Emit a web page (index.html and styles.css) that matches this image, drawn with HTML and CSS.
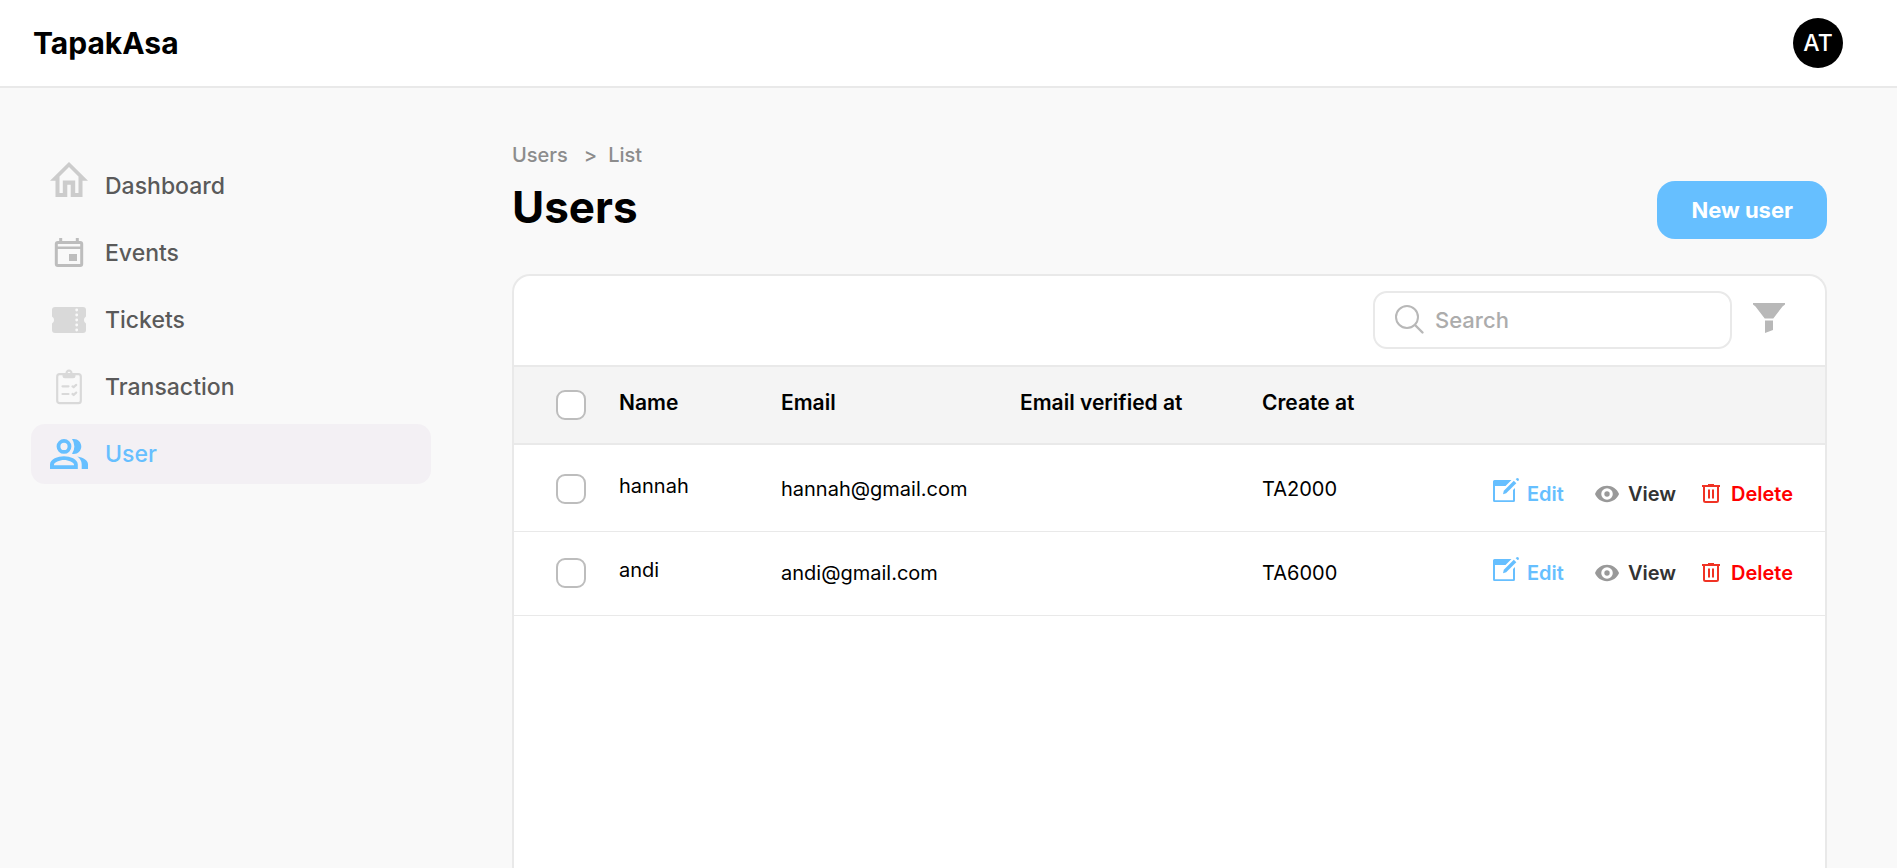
FILE: index.html
```html
<!DOCTYPE html>
<html lang="en">
<head>
<meta charset="utf-8">
<title>Users - TapakAsa</title>
<link rel="stylesheet" href="styles.css">
</head>
<body>
<svg class="sprite" aria-hidden="true">
  <symbol id="i-edit" viewBox="0 0 26 32">
    <path d="M1.500 2H18.500l-6 6H2v14.300h18V12l2-2v12.500a1.500 1.500 0 0 1-1.500 1.500h-19A1.500 1.500 0 0 1 0 22.500v-19A1.500 1.500 0 0 1 1.500 2z" fill="currentColor"/>
    <path d="M20.800 2.700l2.500 2.500L13.200 15.200 10 16.200 10.800 12.800z" fill="currentColor"/>
    <path d="M23 1.200L24.500 0 26 1.500l-1.200 1.500z" fill="currentColor" stroke="currentColor" stroke-width=".6" stroke-linejoin="round"/>
  </symbol>
  <symbol id="i-eye" viewBox="0 0 26 18">
    <path fill-rule="evenodd" d="M0 9C2 4 7 .5 12.500 .5S23 4 25 9c-2 5-7 8.500-12.500 8.500S2 14 0 9zm12.500 6a6 6 0 1 0 0-12 6 6 0 0 0 0 12z" fill="currentColor"/>
    <circle cx="12.500" cy="9" r="2.800" fill="currentColor"/>
  </symbol>
  <symbol id="i-trash" viewBox="0 0 21 20">
    <path d="M0 2h18M6 1h6" stroke="currentColor" stroke-width="2" fill="none"/>
    <path d="M2 2v14.500a1.500 1.500 0 0 0 1.500 1.500h11a1.500 1.500 0 0 0 1.500-1.500V2M7 5.500v9M11 5.500v9" stroke="currentColor" stroke-width="2" fill="none"/>
  </symbol>
</svg>

<header class="topbar">
  <a class="brand" href="#">TapakAsa</a>
  <button class="avatar" type="button" aria-label="Account AT">AT</button>
</header>

<div class="layout">
  <nav class="sidebar" aria-label="Main">
    <a class="nav-item" href="#">
      <svg class="nav-icon home" viewBox="0 0 38 48"><path fill-rule="evenodd" d="M19 0l19 18.700h-5.500V35H20.700V22.700h-3.400V35H5.500V18.700H0zM9.500 31h3.300V18.500h12.400V31h3.300V14.500L19 5 9.500 14.500z" fill="currentColor"/></svg>
      <span>Dashboard</span>
    </a>
    <a class="nav-item" href="#">
      <svg class="nav-icon events" viewBox="0 0 38 48"><rect x="6.300" y="13.500" width="25.400" height="23" rx="1.500" fill="none" stroke="currentColor" stroke-width="3"/><path d="M5 17.500h28V20H5zM9.200 9h3v4h-3zM25.800 9h3v4h-3zM19 25h8v7h-8z" fill="currentColor"/></svg>
      <span>Events</span>
    </a>
    <a class="nav-item" href="#">
      <svg class="nav-icon light" viewBox="0 0 38 48"><path fill-rule="evenodd" d="M5 11h28a3 3 0 0 1 3 3v6.500a4 4 0 0 0 0 7V34a3 3 0 0 1-3 3H5a3 3 0 0 1-3-3v-6.500a4 4 0 0 0 0-7V14a3 3 0 0 1 3-3z" fill="currentColor"/><path d="M26.700 14v21" fill="none" stroke="#f9f9f9" stroke-width="2.800" stroke-linecap="round" stroke-dasharray="0 5"/></svg>
      <span>Tickets</span>
    </a>
    <a class="nav-item" href="#">
      <svg class="nav-icon light" viewBox="0 0 38 48"><rect x="7.200" y="11.200" width="23.600" height="29" rx="2.500" fill="none" stroke="currentColor" stroke-width="2.200"/><path fill-rule="evenodd" d="M12.500 10.500h3A3.500 3.500 0 0 1 19 6.500a3.500 3.500 0 0 1 3.500 4h3v2.200a2.500 2.500 0 0 1-2.500 2.500h-8a2.500 2.500 0 0 1-2.500-2.500zM19 8.800a1.400 1.400 0 1 0 0 2.800 1.400 1.400 0 0 0 0-2.800z" fill="currentColor"/><path d="M12.500 23.300h6M12.500 31h6M22.500 23.300l1.200.8 2.500-2.200M22.500 31l1.200.8 2.500-2.200" fill="none" stroke="currentColor" stroke-width="2.200" stroke-linecap="round"/></svg>
      <span>Transaction</span>
    </a>
    <a class="nav-item active" href="#" aria-current="page">
      <svg class="nav-icon" viewBox="0 0 38 48"><circle cx="14" cy="16.400" r="5.500" fill="none" stroke="currentColor" stroke-width="3.800"/><path fill-rule="evenodd" d="M0 39v-4.500C0 29 8 26.200 14 26.200s13.800 2.800 13.800 8.300V39zm4-3.700h20v-.8c0-2-5.500-4.500-10-4.500S4 32.500 4 34.500z" fill="currentColor"/><path d="M27.300 26.400C33 27.500 38 30 38 34.300V39h-6.300v-4.700c0-3.300-1.700-6-4.400-7.900zM22 23.700a12.500 12.500 0 0 0 0-14.600c5-1.200 9.300 2.700 9.300 7.300s-4.300 8.500-9.300 7.300z" fill="currentColor"/></svg>
      <span>User</span>
    </a>
  </nav>

  <main class="content">
    <div class="page-head">
      <div>
        <nav class="crumbs" aria-label="Breadcrumb"><a href="#">Users</a><span class="sep">&gt;</span><span>List</span></nav>
        <h1>Users</h1>
      </div>
      <button class="primary" type="button">New user</button>
    </div>

    <section class="card">
      <div class="toolbar">
        <label class="search">
          <svg class="search-icon" viewBox="0 0 30 30" aria-hidden="true"><circle cx="12" cy="12" r="11" fill="none" stroke="currentColor" stroke-width="2"/><path d="M20 20l7.500 7.500" stroke="currentColor" stroke-width="2.400" stroke-linecap="round"/></svg>
          <input type="search" placeholder="Search" aria-label="Search">
        </label>
        <button class="filter" type="button" aria-label="Filter">
          <svg viewBox="0 0 32 34"><path d="M0 0h32v1.500L29.500 3.500 20.300 15.500h-8.600L2.500 3.500 0 1.500zM12 17.500h8V27l-8 3z" fill="currentColor"/></svg>
        </button>
      </div>

      <table class="users">
        <colgroup><col class="c-check"><col class="c-name"><col class="c-email"><col class="c-verified"><col class="c-created"><col class="c-actions"></colgroup>
        <thead>
          <tr>
            <td class="check"><input type="checkbox" aria-label="Select all"></td>
            <th scope="col">Name</th><th scope="col">Email</th><th scope="col">Email verified at</th><th scope="col">Create at</th><td></td>
          </tr>
        </thead>
        <tbody>
          <tr>
            <td class="check"><input type="checkbox" aria-label="Select hannah"></td>
            <td class="name">hannah</td><td>hannah@gmail.com</td><td></td><td>TA2000</td>
            <td class="row-actions"><div class="actions">
              <a class="edit" href="#"><svg><use href="#i-edit"/></svg>Edit</a>
              <a class="view" href="#"><svg><use href="#i-eye"/></svg>View</a>
              <a class="delete" href="#"><svg><use href="#i-trash"/></svg>Delete</a>
            </div></td>
          </tr>
          <tr>
            <td class="check"><input type="checkbox" aria-label="Select andi"></td>
            <td class="name">andi</td><td>andi@gmail.com</td><td></td><td>TA6000</td>
            <td class="row-actions"><div class="actions">
              <a class="edit" href="#"><svg><use href="#i-edit"/></svg>Edit</a>
              <a class="view" href="#"><svg><use href="#i-eye"/></svg>View</a>
              <a class="delete" href="#"><svg><use href="#i-trash"/></svg>Delete</a>
            </div></td>
          </tr>
        </tbody>
      </table>
    </section>
  </main>
</div>
</body>
</html>
```
FILE: styles.css
```css
* { box-sizing: border-box; }

body {
  margin: 0;
  min-height: 100vh;
  display: flex;
  flex-direction: column;
  background: #f9f9f9;
  color: #000;
  font-family: Inter, "Liberation Sans", sans-serif;
  font-size: 20px;
}

a { color: inherit; text-decoration: none; }
button { font: inherit; border: 0; cursor: pointer; }
svg { display: block; flex: none; }
.sprite { display: none; }

.topbar {
  display: flex;
  align-items: center;
  justify-content: space-between;
  height: 88px;
  padding: 0 54px 0 33px;
  background: #fff;
  border-bottom: 2px solid #e9e9e9;
}
.brand { font-size: 30px; font-weight: 700; }
.avatar {
  width: 50px;
  height: 50px;
  padding: 0;
  border-radius: 50%;
  background: #000;
  color: #fff;
  font-size: 23px;
  font-weight: 500;
}

.layout { flex: 1; display: flex; }

.sidebar {
  flex: none;
  width: 431px;
  padding: 68px 0 0 31px;
  display: flex;
  flex-direction: column;
  gap: 7px;
}
.nav-item {
  display: flex;
  align-items: center;
  gap: 17px;
  height: 60px;
  padding: 0 19px;
  border-radius: 14px;
  color: #5a5a5a;
  font-size: 23px;
  font-weight: 500;
}
.nav-icon { width: 38px; height: 48px; }
.home { color: #ccc; }
.events { color: #bdbdbd; }
.light { color: #d9d9d9; }
.active { background: #f3f0f4; color: #66bfff; }

.content {
  flex: 1;
  min-width: 0;
  display: flex;
  flex-direction: column;
  padding: 55px 70px 0 81px;
}
.page-head {
  display: flex;
  align-items: flex-end;
  justify-content: space-between;
  margin-bottom: 35px;
}
.crumbs {
  display: flex;
  color: #8c8c8c;
  font-weight: 500;
  line-height: 24px;
}
.sep { margin: 0 11px 0 16px; }
h1 {
  margin: 8px 0 0;
  font-size: 44px;
  font-weight: 700;
  line-height: 64px;
}
.primary {
  height: 58px;
  padding: 0 34px;
  border-radius: 18px;
  background: #66bfff;
  color: #fff;
  font-size: 22px;
  font-weight: 700;
}

.card {
  flex: 1;
  background: #fff;
  border: 2px solid #e9e9e9;
  border-bottom: 0;
  border-radius: 18px 18px 0 0;
}
.toolbar {
  display: flex;
  align-items: center;
  justify-content: flex-end;
  gap: 21px;
  height: 89px;
  padding: 0 40px 2px;
}
.search {
  display: flex;
  align-items: center;
  gap: 10px;
  width: 359px;
  height: 58px;
  padding: 0 20px;
  border: 2px solid #e9e9e9;
  border-radius: 14px;
  color: #b8b8b8;
}
.search-icon { width: 30px; height: 30px; }
.search input {
  flex: 1;
  min-width: 0;
  padding: 0;
  border: 0;
  outline: 0;
  background: none;
  font: inherit;
  font-size: 22px;
  font-weight: 500;
  color: #333;
}
.search input::placeholder { color: #acacac; }
.filter { padding: 0; background: none; color: #b8b8b8; }
.filter svg { width: 32px; height: 34px; }

.users {
  width: 100%;
  table-layout: fixed;
  border-collapse: separate;
  border-spacing: 0;
}
.c-check { width: 105px; }
.c-name { width: 162px; }
.c-email { width: 239px; }
.c-verified { width: 242px; }
.c-created { width: 231px; }
.c-actions { width: 332px; }

.users th, .users td { padding: 0; text-align: left; white-space: nowrap; }
.users thead tr { height: 80px; }
.users thead th, .users thead td {
  background: #f4f4f4;
  border-top: 2px solid #e9e9e9;
  border-bottom: 2px solid #e9e9e9;
}
.users thead th { padding-bottom: 5px; font-size: 21px; font-weight: 600; }
.users tbody tr { height: 84px; }
.users tbody tr:first-child { height: 87px; }
.users tbody td { padding-bottom: 2px; border-bottom: 1px solid #e9e9e9; }
.users tbody tr:first-child td { padding-top: 4px; }
.users tbody .name { padding-bottom: 8px; }
.users .check { padding-left: 42px; }
.check input {
  appearance: none;
  display: block;
  width: 30px;
  height: 30px;
  margin: 0;
  background: #fff;
  border: 2px solid #bdbdbd;
  border-radius: 9px;
}
.check input:checked { background: #66bfff; }
.users tbody tr:first-child .row-actions { padding-top: 14px; }

.actions { display: flex; align-items: center; font-weight: 600; }
.actions a { display: flex; align-items: center; gap: 8px; }
.edit { color: #66bfff; margin-right: 31px; }
.edit svg { width: 26px; height: 32px; }
.view { color: #333; margin-right: 26px; }
.view svg { width: 25px; height: 18px; color: #999; }
.delete { color: #f00; }
.delete svg { width: 21px; height: 20px; color: #f03325; }
```
